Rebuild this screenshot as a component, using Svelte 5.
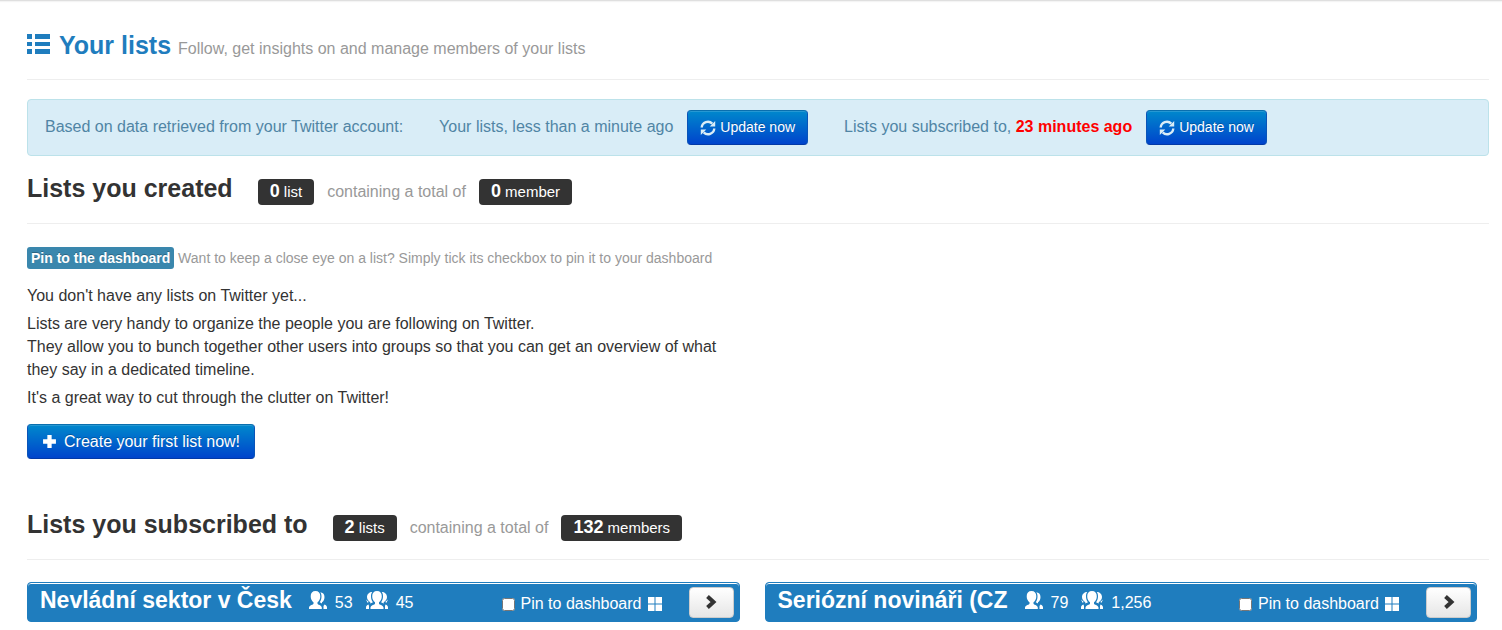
<script>
  const cards = [
    { id: 'nevladni', name: 'Nevládní sektor v Česk', members: '53', subscribers: '45' },
    { id: 'seriozni', name: 'Seriózní novináři (CZ', members: '79', subscribers: '1,256' }
  ];
</script>

{#snippet refresh()}
  <svg class="refresh" viewBox="0 0 16 16" aria-hidden="true">
    <path d="M1.700 7.500A6.200 6.200 0 0 1 12.300 3.700" />
    <path d="M14.300 8.500A6.200 6.200 0 0 1 3.700 12.300" />
    <path class="solid" d="M15.200 1V6.500H9.700z M.8 15V9.500H6.300z" />
  </svg>
{/snippet}

{#snippet sectionHead(title, lists, listWord, members, memberWord)}
  <header class="section-head">
    <h2>{title}</h2>
    <span class="badge"><b>{lists}</b> {listWord}</span>
    <span class="muted">containing a total of</span>
    <span class="badge"><b>{members}</b> {memberWord}</span>
  </header>
{/snippet}

<main>
  <header class="page-head">
    <svg class="list-icon" viewBox="0 0 23 20" aria-hidden="true">
      <path d="M0 0h5v5H0zM8 0h15v5H8zM0 8h5v4H0zM8 8h15v4H8zM0 15h5v5H0zM8 15h15v5H8z" />
    </svg>
    <h1>Your lists</h1>
    <p>Follow, get insights on and manage members of your lists</p>
  </header>

  <section class="alert">
    <span class="source">Based on data retrieved from your Twitter account:</span>
    <span>Your lists, less than a minute ago</span>
    <button class="primary small first">{@render refresh()}Update now</button>
    <span>Lists you subscribed to, <strong>23 minutes ago</strong></span>
    <button class="primary small">{@render refresh()}Update now</button>
  </section>

  <section class="created">
    {@render sectionHead('Lists you created', '0', 'list', '0', 'member')}
    <p class="hint"><b>Pin to the dashboard</b> Want to keep a close eye on a list? Simply tick its checkbox to pin it to your dashboard</p>
    <div class="intro">
      <p>You don't have any lists on Twitter yet...</p>
      <p>Lists are very handy to organize the people you are following on Twitter.<br />They allow you to bunch together other users into groups so that you can get an overview of what they say in a dedicated timeline.</p>
      <p>It's a great way to cut through the clutter on Twitter!</p>
    </div>
    <button class="primary">
      <svg class="plus" viewBox="0 0 14 14" aria-hidden="true"><path d="M5 1h4v4h4v4H9v4H5V9H1V5h4z" /></svg>Create your first list now!
    </button>
  </section>

  <section>
    {@render sectionHead('Lists you subscribed to', '2', 'lists', '132', 'members')}
    <div class="cards">
      {#each cards as card}
        <article>
          <h3>{card.name}</h3>
          <span class="count">
            <svg class="person" viewBox="0 0 18 18" aria-hidden="true">
              <path d="M6.500 0C9.600 0 11.300 2 11.300 5.200c0 2.800-1.100 4.800-2.800 6v1.500c0 1 4 1.200 4.300 3.800V18H0v-1.500c.3-2.600 4.500-2.800 4.500-3.800v-1.500C2.800 10 1.700 8 1.700 5.200 1.700 2 3.400 0 6.500 0z" />
              <path d="M11.200 1.200c2.500.2 4.300 1.800 4.300 4.800 0 2.400-1 4.300-2.500 5.300v1.200l-2.300-1.200c1.300-1.600 1.800-3.600 1.800-6 0-1.700-.4-3-1.300-4.100zM15.500 13.500c1.700.5 2.500 1.500 2.500 3V18h-3.500v-3z" />
            </svg>
            {card.members}
          </span>
          <span class="count">
            <svg class="group" viewBox="0 0 22 18" aria-hidden="true">
              <path d="M11 0c3.100 0 4.800 2 4.800 5.200 0 2.800-1.100 4.800-2.800 6v1.500c0 1 4.200 1.200 4.500 3.800V18h-13v-1.500c.3-2.600 4.500-2.800 4.500-3.800v-1.500c-1.700-1.200-2.800-3.200-2.800-6C6.200 2 7.900 0 11 0z" />
              <path d="M6.200 1C5.300 2.200 5 3.600 5 5.300c0 2.400.6 4.400 2 6l-2.700 1.200v-1.200C2.500 10 1 8.500 1 6 1 3 3.500 1 6.200 1zM15.800 1c.9 1.200 1.200 2.600 1.200 4.300 0 2.400-.6 4.400-2 6l2.700 1.200v-1.200C19.500 10 21 8.500 21 6c0-3-2.500-5-5.200-5zM2.500 13.500c-1.700.5-2.500 1.500-2.500 3V18h3v-3zM19.500 13.500c1.700.5 2.500 1.500 2.500 3V18h-3v-3z" />
              <path d="M0 8.500 2.800 11l-1.300.8zM22 8.500 19.200 11l1.300.8z" />
            </svg>
            {card.subscribers}
          </span>
          <label for={card.id}>
            <input type="checkbox" id={card.id} />Pin to dashboard
            <svg class="tiles" viewBox="0 0 14 14" aria-hidden="true"><path d="M0 0h6.500v6.500H0zM7.500 0H14v6.500H7.500zM0 7.500h6.500V14H0zM7.500 7.500H14V14H7.500z" /></svg>
          </label>
          <button class="open" aria-label="Open list">
            <svg viewBox="0 0 12 14" aria-hidden="true"><path d="M2.500 1.500 8.500 7l-6 5.500" /></svg>
          </button>
        </article>
      {/each}
    </div>
  </section>
</main>

<style>
  :global(body) {
    margin: 0;
    background: #fff;
    color: #333;
    font: 16px/23px "Liberation Sans", Arial, sans-serif;
  }
  main {
    box-sizing: border-box;
    padding: 25px 13px 0 27px;
    box-shadow: inset 0 3px 2px -2px #d4d4d4;
  }
  h1, h2, h3, p { margin: 0; }
  svg { fill: currentColor; flex: none; }
  button { font: inherit; cursor: pointer; }

  .page-head {
    display: flex;
    align-items: baseline;
    height: 54px;
    border-bottom: 1px solid #eee;
    color: #999;
  }
  .page-head h1 {
    margin: 0 7px 0 9px;
    color: #1f7dbe;
    font-size: 25px;
    line-height: 40px;
  }
  .list-icon { width: 23px; height: 20px; color: #1f7dbe; }

  .alert {
    display: flex;
    align-items: center;
    box-sizing: border-box;
    margin: 19px 0 12px;
    padding: 10px 17px;
    border: 1px solid #bce2ea;
    border-radius: 4px;
    background: #d9edf7;
    color: #5085a5;
    white-space: nowrap;
  }
  .alert span { padding-bottom: 2px; }
  .alert strong { color: #f00; }
  .source { margin-right: 36px; }

  .primary {
    display: inline-flex;
    align-items: center;
    gap: 7px;
    height: 35px;
    padding: 0 14px;
    border: 1px solid;
    border-color: #0a6fae #0a54b8 #0339a6;
    border-radius: 4px;
    background: linear-gradient(#0088cc, #0044cc);
    box-shadow: inset 0 1px 0 rgba(255, 255, 255, .15);
    color: #fff;
    text-shadow: 0 -1px 0 rgba(0, 0, 0, .25);
    white-space: nowrap;
  }
  .small { gap: 4px; margin-left: 14px; padding: 0 12px; font-size: 14px; }
  .first { margin-right: 36px; }
  .refresh { width: 16px; height: 16px; color: #d9edf7; }
  .refresh path { fill: none; stroke: currentColor; stroke-width: 2.400; }
  .refresh .solid { fill: currentColor; stroke: none; }
  .plus { width: 15px; height: 15px; }

  .section-head {
    display: flex;
    align-items: flex-start;
    gap: 13px;
    height: 55px;
    border-bottom: 1px solid #eee;
  }
  .section-head h2 {
    margin-right: 12px;
    font-size: 25px;
    line-height: 40px;
  }
  .badge {
    margin-top: 11px;
    padding: 0 12px;
    border-radius: 4px;
    background: #333;
    color: #fff;
    font-size: 15px;
    line-height: 26px;
  }
  .badge b { font-size: 18px; line-height: 20px; }
  .muted { margin-top: 12px; color: #999; }

  .hint {
    margin: 23px 0 15px;
    color: #999;
    font-size: 14px;
    line-height: 22px;
  }
  .hint b {
    display: inline-block;
    padding: 0 4px;
    border-radius: 3px;
    background: #3a87ad;
    color: #fff;
    text-shadow: 0 -1px 0 rgba(0, 0, 0, .25);
  }
  .intro { width: 50%; max-width: 712px; }
  .intro p { margin-bottom: 5px; }
  .created > .primary { margin-top: 10px; }
  .created { margin-bottom: 45px; }

  .cards {
    display: grid;
    grid-template-columns: 1fr 1fr;
    gap: 25px;
    margin: 22px 12px 0 0;
  }
  article {
    display: flex;
    align-items: center;
    box-sizing: border-box;
    height: 40px;
    padding: 0 5px 0 12px;
    border: 1px solid #1f7dbe;
    border-radius: 4px;
    background: #1f7dbe;
    box-shadow: inset 0 1px 0 #fff;
    color: #fff;
    white-space: nowrap;
  }
  h3 { margin-right: 17px; padding-bottom: 3px; font-size: 23px; }
  .count { display: flex; gap: 8px; margin-right: 13px; }
  .person { width: 18px; height: 18px; }
  .group { width: 22px; height: 18px; }
  article label {
    display: flex;
    align-items: center;
    gap: 6px;
    margin-left: auto;
    padding-top: 3px;
  }
  article input { width: 13px; height: 13px; margin: 2px 0 0; }
  .tiles { width: 14px; height: 14px; }
  .open {
    display: grid;
    place-items: center;
    width: 45px;
    height: 31px;
    margin-left: 27px;
    padding: 0;
    border: 1px solid #ccc;
    border-radius: 4px;
    background: linear-gradient(#fff, #e6e6e6);
    color: #333;
  }
  .open svg { width: 12px; height: 14px; }
  .open path { fill: none; stroke: currentColor; stroke-width: 4; }
</style>
